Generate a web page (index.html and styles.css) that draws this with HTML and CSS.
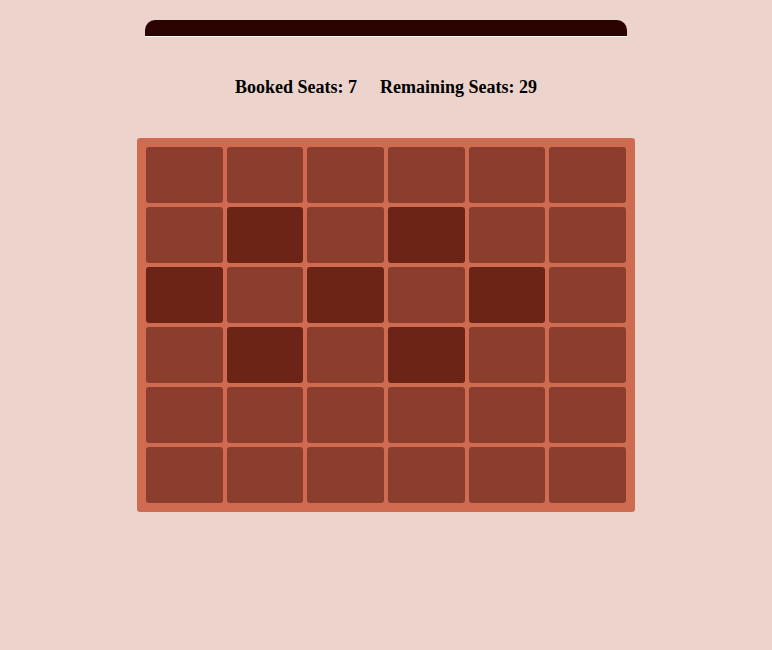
FILE: index.html
```html
<!DOCTYPE html>
<html>
<head>
<meta charset="utf-8">
<link rel="stylesheet" href="styles.css">
</head>
<body>
<div class="app">
  <div class="screen"></div>
  <div class="info">
    <span>Booked Seats: 7</span>
    <span>Remaining Seats: 29</span>
  </div>
  <div class="hall">
    <div class="seat"></div><div class="seat"></div><div class="seat"></div><div class="seat"></div><div class="seat"></div><div class="seat"></div>
    <div class="seat"></div><div class="seat booked"></div><div class="seat"></div><div class="seat booked"></div><div class="seat"></div><div class="seat"></div>
    <div class="seat booked"></div><div class="seat"></div><div class="seat booked"></div><div class="seat"></div><div class="seat booked"></div><div class="seat"></div>
    <div class="seat"></div><div class="seat booked"></div><div class="seat"></div><div class="seat booked"></div><div class="seat"></div><div class="seat"></div>
    <div class="seat"></div><div class="seat"></div><div class="seat"></div><div class="seat"></div><div class="seat"></div><div class="seat"></div>
    <div class="seat"></div><div class="seat"></div><div class="seat"></div><div class="seat"></div><div class="seat"></div><div class="seat"></div>
  </div>
</div>
</body>
</html>
```
FILE: styles.css
```css
html, body {
  margin: 0;
  padding: 0;
  background: #ecd4cc;
  font-family: "Liberation Serif", "Times New Roman", serif;
}
.app {
  display: flex;
  flex-direction: column;
  align-items: center;
  padding-top: 20px;
}
.screen {
  width: 482px;
  height: 16px;
  background: #2b0402;
  border-radius: 10px 10px 0 0;
  border-bottom: 1px solid #ffffff;
}
.info {
  margin-top: 40px;
  display: flex;
  gap: 23px;
  font-size: 18px;
  font-weight: bold;
  color: #000;
  line-height: 21px;
}
.hall {
  margin-top: 40px;
  width: 480px;
  padding: 9px;
  background: #cf6b51;
  border-radius: 3px;
  display: grid;
  grid-template-columns: repeat(6, 1fr);
  grid-auto-rows: 56px;
  gap: 4px;
}
.seat {
  background: #8c3e2e;
  border-radius: 3px;
}
.seat.booked {
  background: #6c2417;
}
```
